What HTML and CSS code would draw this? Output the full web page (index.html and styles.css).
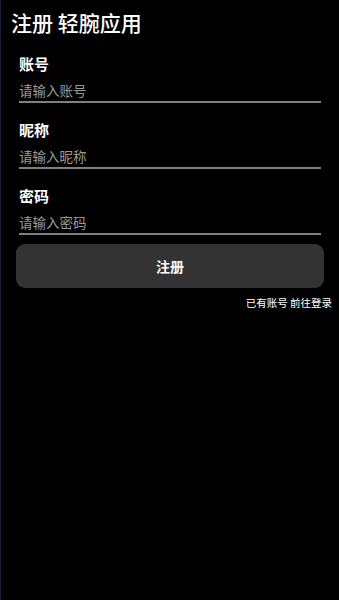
FILE: index.html
```html
<!DOCTYPE html>
<html lang="zh-CN">
  <head>
    <meta charset="UTF-8" />
    <meta name="viewport" content="width=device-width, initial-scale=1.0" />
    <title>注册 轻腕应用</title>
    <link rel="stylesheet" href="styles.css">
  </head>
  <body>
    <main class="page">
      <h1 class="page-title">注册 轻腕应用</h1>
      <form class="register-form" onsubmit="return false">
        <div class="field">
          <label class="field-label" for="account">账号</label>
          <input class="field-input" id="account" type="text" placeholder="请输入账号" />
        </div>
        <div class="field">
          <label class="field-label" for="nickname">昵称</label>
          <input class="field-input" id="nickname" type="text" placeholder="请输入昵称" />
        </div>
        <div class="field">
          <label class="field-label" for="password">密码</label>
          <input class="field-input" id="password" type="password" placeholder="请输入密码" />
        </div>
        <button class="submit-btn" type="submit">注册</button>
        <a class="login-link" href="#">已有账号 前往登录</a>
      </form>
    </main>
  </body>
</html>
```

FILE: styles.css
```css
html,
body {
  margin: 0;
  padding: 0;
  background: #000;
}

body {
  font-family: "Noto Sans CJK SC", "Noto Sans", sans-serif;
  color: #fff;
  min-height: 100vh;
  box-sizing: border-box;
  border-left: 1px solid #1f1d3f;
}

.page {
  display: flex;
  flex-direction: column;
}

.page-title {
  margin: 8px 0 0 10px;
  font-size: 21px;
  line-height: 28px;
  font-weight: 500;
}

.register-form {
  display: flex;
  flex-direction: column;
  gap: 16px;
  padding: 17px 18px 0 18px;
}

.field {
  display: flex;
  flex-direction: column;
  gap: 4px;
}

.field-label {
  font-size: 15px;
  line-height: 22px;
  font-weight: 700;
}

.field-input {
  box-sizing: border-box;
  height: 24px;
  margin: 0;
  padding: 0;
  border: none;
  border-bottom: 2px solid #808080;
  background: transparent;
  color: #fff;
  font-family: inherit;
  font-size: 13.5px;
  line-height: 22px;
  outline: none;
}

.field-input::placeholder {
  color: #9a9a9a;
}

.submit-btn {
  margin: -7px -3px 0 -3px;
  height: 44px;
  border: none;
  border-radius: 9px;
  background: #333;
  color: #fff;
  font-family: inherit;
  font-size: 14px;
  font-weight: 700;
}

.login-link {
  align-self: flex-end;
  margin: -9px -11px 0 0;
  font-size: 10.5px;
  line-height: 16px;
  color: #fff;
  text-decoration: none;
}
```
